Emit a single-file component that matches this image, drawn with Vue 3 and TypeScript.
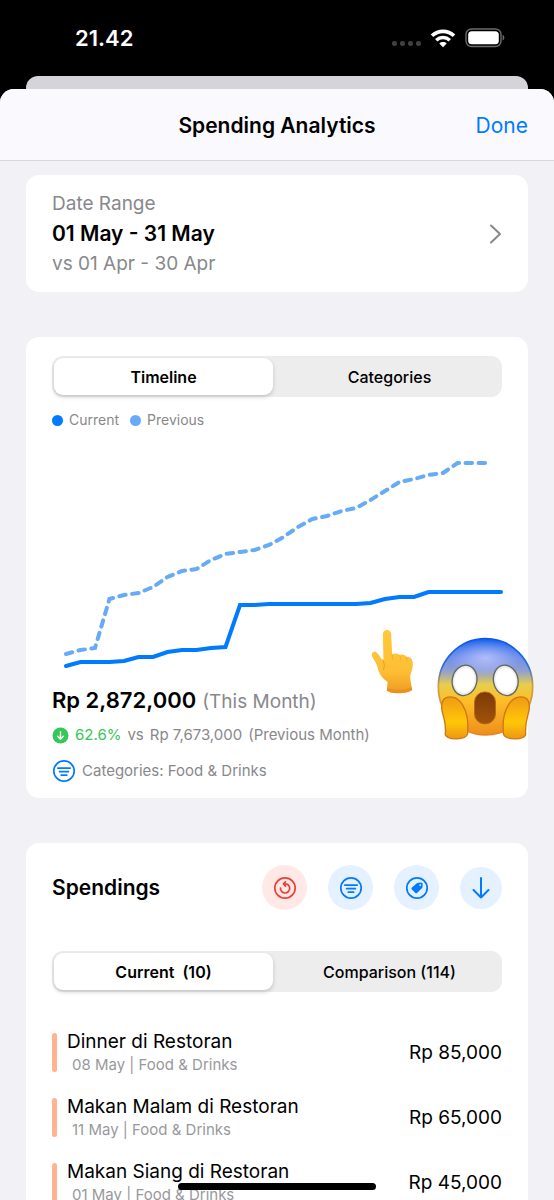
<script setup lang="ts">
import { ref } from 'vue'

interface Spending {
  title: string
  date: string
  category: string
  amount: string
}

const chartView = ref<'timeline' | 'categories'>('timeline')
const listView = ref<'current' | 'comparison'>('current')

const spendings: Spending[] = [
  { title: 'Dinner di Restoran', date: '08 May', category: 'Food & Drinks', amount: 'Rp 85,000' },
  { title: 'Makan Malam di Restoran', date: '11 May', category: 'Food & Drinks', amount: 'Rp 65,000' },
  { title: 'Makan Siang di Restoran', date: '01 May', category: 'Food & Drinks', amount: 'Rp 45,000' },
]

// Daily running totals, as heights in the chart's own 450 x 250 space
const currentLine = [
  234, 230, 230, 230, 229, 225, 225, 220, 218, 218, 216, 215, 173, 173, 172, 172,
  172, 172, 172, 172, 172, 171, 167, 165, 165, 160, 160, 160, 160, 160, 160,
]
const previousLine = [
  222, 218, 216, 167, 163, 161, 155, 145, 139, 137, 128, 122, 120, 118, 113,
  105, 95, 87, 84, 79, 76, 68, 59, 50, 47, 43, 41, 31, 31, 31,
]
const toPoints = (values: number[]): string =>
  values.map((y, day) => `${(14 + day * 14.5).toFixed(1)},${y}`).join(' ')
</script>

<template>
  <div class="page">
    <header class="status">
      <span class="time">21.42</span>
      <div class="status-icons">
        <svg width="29" height="6" viewBox="0 0 29 6" fill="#404040" aria-hidden="true">
          <rect x="0" y="0" width="5" height="5" rx="2" />
          <rect x="8" y="0" width="5" height="5" rx="2" />
          <rect x="16" y="0" width="5" height="5" rx="2" />
          <rect x="24" y="0" width="5" height="5" rx="2" />
        </svg>
        <svg class="wifi" width="26" height="19" viewBox="0 0 26 19" fill="none" stroke="#fff" aria-hidden="true">
          <path d="M2 6.8C8.2 .9 17.8 .9 24 6.8" stroke-width="3.6" />
          <path d="M6.2 11.2c3.9-3.6 9.7-3.6 13.6 0" stroke-width="3.5" />
          <path d="M9.3 14.5c2.1-1.9 5.3-1.9 7.4 0L13 18.2z" fill="#fff" stroke="none" />
        </svg>
        <svg width="40" height="20" viewBox="0 0 40 20" aria-hidden="true">
          <rect x="1" y="1" width="35" height="17.5" rx="5.5" fill="none" stroke="#6b6b6b" stroke-width="1.4" />
          <rect x="3.2" y="3.2" width="30.6" height="13.1" rx="3.6" fill="#fff" />
          <path d="M37.6 6.8c2.3.8 2.3 5 0 5.8z" fill="#6b6b6b" />
        </svg>
      </div>
    </header>

    <div class="behind"></div>

    <main class="sheet">
      <div class="nav">
        <h1>Spending Analytics</h1>
        <button type="button" class="done">Done</button>
      </div>

      <button type="button" class="card date-card">
        <span class="date-text">
          <span class="muted">Date Range</span>
          <strong>01 May - 31 May</strong>
          <span class="muted">vs 01 Apr - 30 Apr</span>
        </span>
        <svg width="13" height="22" viewBox="0 0 13 22" fill="none" stroke="#88888c" stroke-width="2" stroke-linecap="round" stroke-linejoin="round" aria-hidden="true">
          <path d="M2 2.5 11 11 2 19.5" />
        </svg>
      </button>

      <section class="card chart-card">
        <div class="segmented">
          <button type="button" :class="{ on: chartView === 'timeline' }" :aria-pressed="chartView === 'timeline'" @click="chartView = 'timeline'">Timeline</button>
          <button type="button" :class="{ on: chartView === 'categories' }" :aria-pressed="chartView === 'categories'" @click="chartView = 'categories'">Categories</button>
        </div>

        <div class="legend">
          <span class="key"><i class="dot"></i>Current</span>
          <span class="key"><i class="dot light"></i>Previous</span>
        </div>

        <svg class="chart" viewBox="0 0 450 250" fill="none" stroke-width="4" stroke-linecap="round" stroke-linejoin="miter" role="img" aria-label="Spending this month and last month">
          <polyline :points="toPoints(previousLine)" stroke="#66abf6" stroke-dasharray="6.5 6.5" />
          <polyline :points="toPoints(currentLine)" stroke="#007aff" />
        </svg>

        <p class="total"><strong>Rp 2,872,000</strong><span>(This Month)</span></p>
        <p class="change">
          <svg width="17" height="17" viewBox="0 0 17 17" aria-hidden="true">
            <circle cx="8.5" cy="8.5" r="8" fill="#34c759" />
            <path d="M8.5 4.6v7.4M5.6 9.3l2.9 2.9 2.9-2.9" fill="none" stroke="#fff" stroke-width="1.4" stroke-linecap="round" stroke-linejoin="round" />
          </svg>
          <span class="down">62.6%</span>
          <span>vs</span>
          <span>Rp 7,673,000</span>
          <span>(Previous Month)</span>
        </p>
        <p class="filter">
          <svg width="24" height="24" viewBox="0 0 24 24" fill="none" stroke="#007aff" stroke-width="1.7" stroke-linecap="round" aria-hidden="true">
            <circle cx="12" cy="12" r="10.2" />
            <path d="M5.8 9.1h12.4M7.6 12.7h8.8M9.3 16.2h5.4" />
          </svg>
          <span>Categories: Food &amp; Drinks</span>
        </p>

        <svg class="finger" width="43" height="66" viewBox="64 56 128 198" aria-hidden="true">
          <defs>
            <linearGradient id="skin" x1="0" y1="0" x2="0" y2="1">
              <stop offset="0" stop-color="#ffc938" />
              <stop offset=".65" stop-color="#fdbf35" />
              <stop offset="1" stop-color="#ee9a21" />
            </linearGradient>
          </defs>
          <path d="M99 72c0-17 25-17 25 0l3 60c7-4 16-3 22 2 8-3 16-1 20 5 12-1 20 7 20 20 0 20-8 31-8 45l6 34c-14 13-61 14-76 3l2-26C99 205 87 192 83 171c-2-12-10-20-16-32-5-13 8-20 17-9 7 8 10 17 17 22z" fill="url(#skin)" />
          <path d="M127 132l1 16M149 135c4 4 4 8 3 12M169 140c3 4 3 8 1 12" fill="none" stroke="#efa92b" stroke-width="2" stroke-linecap="round" />
          <path d="M99 148c5 10 6 20 2 30" fill="none" stroke="#e29420" stroke-width="2.500" stroke-linecap="round" />
          <path d="M112 232c21 9 55 8 74-2l1 10c-14 11-61 12-75 1z" fill="#df861b" opacity=".5" />
        </svg>

        <svg class="scream" width="97" height="104" viewBox="260 82 292 312" aria-hidden="true">
          <defs>
            <linearGradient id="face" x1="0" y1="0" x2="0" y2="1">
              <stop offset="0" stop-color="#1661ec" />
              <stop offset=".2" stop-color="#6f8eeb" />
              <stop offset=".34" stop-color="#91a0cf" />
              <stop offset=".48" stop-color="#e8ce4c" />
              <stop offset=".65" stop-color="#fdbd28" />
              <stop offset="1" stop-color="#ee8f1b" />
            </linearGradient>
            <linearGradient id="rim" x1="0" y1="0" x2="0" y2="1">
              <stop offset="0" stop-color="#0754ee" />
              <stop offset=".3" stop-color="#2c72d5" />
              <stop offset=".48" stop-color="#d19c40" />
              <stop offset="1" stop-color="#e98419" />
            </linearGradient>
            <radialGradient id="glow" cx=".5" cy=".5" r=".5">
              <stop offset="0" stop-color="#bdc4ff" stop-opacity=".85" />
              <stop offset="1" stop-color="#bdc4ff" stop-opacity="0" />
            </radialGradient>
            <radialGradient id="eye" cx=".5" cy=".5" r=".5">
              <stop offset=".75" stop-color="#fff" />
              <stop offset="1" stop-color="#dedede" />
            </radialGradient>
            <linearGradient id="mouth" x1="0" y1="0" x2="0" y2="1">
              <stop offset="0" stop-color="#7a3a08" />
              <stop offset="1" stop-color="#a35309" />
            </linearGradient>
            <linearGradient id="palm" x1="0" y1="0" x2="0" y2="1">
              <stop offset="0" stop-color="#f09a15" />
              <stop offset=".6" stop-color="#ffc708" />
              <stop offset="1" stop-color="#ee9614" />
            </linearGradient>
          </defs>
          <ellipse cx="406" cy="231" rx="142" ry="145" fill="url(#face)" stroke="url(#rim)" stroke-width="5" />
          <ellipse cx="406" cy="145" rx="108" ry="54" fill="url(#glow)" />
          <ellipse cx="343" cy="212" rx="37" ry="46" transform="rotate(12 343 212)" fill="url(#eye)" stroke="#65665d" stroke-width="4" />
          <ellipse cx="467" cy="212" rx="37" ry="46" transform="rotate(-12 467 212)" fill="url(#eye)" stroke="#65665d" stroke-width="4" />
          <rect x="373" y="247" width="63" height="96" rx="30" fill="url(#mouth)" stroke="#b66a0d" stroke-width="3" />
          <path d="M281 268c17-13 42-5 55 16 13 20 20 50 16 90-5 17-59 20-67 2 4-45-11-62-11-82 0-12 2-20 7-26z" fill="url(#palm)" stroke="#cf7712" stroke-width="4" />
          <path d="M531 268c-17-13-42-5-55 16-13 20-20 50-16 90 5 17 59 20 67 2-4-45 11-62 11-82 0-12-2-20-7-26z" fill="url(#palm)" stroke="#cf7712" stroke-width="4" />
        </svg>
      </section>

      <section class="card list-card">
        <div class="list-head">
          <h2>Spendings</h2>
          <div class="actions">
            <button type="button" class="round red" aria-label="Reset">
              <svg width="24" height="24" viewBox="0 0 24 24" fill="none" stroke="currentColor" stroke-width="1.7" stroke-linecap="round" stroke-linejoin="round" aria-hidden="true">
                <circle cx="12" cy="12" r="10.2" />
                <path d="M7.5 12.2a4.6 4.6 0 1 0 4.3-4.4M12.4 5.8l-2 2 2.1 2.3" />
              </svg>
            </button>
            <button type="button" class="round" aria-label="Filter">
              <svg width="24" height="24" viewBox="0 0 24 24" fill="none" stroke="currentColor" stroke-width="1.7" stroke-linecap="round" aria-hidden="true">
                <circle cx="12" cy="12" r="10.2" />
                <path d="M5.8 9.1h12.4M7.6 12.7h8.8M9.3 16.2h5.4" />
              </svg>
            </button>
            <button type="button" class="round" aria-label="Tags">
              <svg width="24" height="24" viewBox="0 0 24 24" fill="none" stroke="currentColor" stroke-width="1.7" aria-hidden="true">
                <circle cx="12" cy="12" r="10.2" />
                <path fill="currentColor" fill-rule="evenodd" stroke="none" d="M13.3 6.8 16 6.5c1.1-.1 1.8.7 1.7 1.7l-.2 2.7c0 .5-.2.9-.6 1.3l-4.6 4.6c-.7.7-1.5.7-2.2 0L6.9 13.6c-.7-.7-.7-1.5 0-2.2L11.6 7.4c.5-.4 1-.5 1.7-.6zM15.2 8.2a.9.9 0 1 0 .01 0z" />
              </svg>
            </button>
            <button type="button" class="round small" aria-label="Sort descending">
              <svg width="20" height="24" viewBox="0 0 20 24" fill="none" stroke="currentColor" stroke-width="2" stroke-linecap="round" stroke-linejoin="round" aria-hidden="true">
                <path d="M10 2v19.5M2.5 14 10 21.5 17.5 14" />
              </svg>
            </button>
          </div>
        </div>

        <div class="segmented">
          <button type="button" :class="{ on: listView === 'current' }" :aria-pressed="listView === 'current'" @click="listView = 'current'">Current&nbsp; (10)</button>
          <button type="button" :class="{ on: listView === 'comparison' }" :aria-pressed="listView === 'comparison'" @click="listView = 'comparison'">Comparison (114)</button>
        </div>

        <ul class="rows">
          <li v-for="item in spendings" :key="item.title">
            <i class="bar"></i>
            <div class="info">
              <span class="name">{{ item.title }}</span>
              <span class="meta">{{ item.date }} | {{ item.category }}</span>
            </div>
            <span class="amount">{{ item.amount }}</span>
          </li>
        </ul>
      </section>
    </main>

    <div class="home-indicator"></div>
  </div>
</template>

<style>
body {
  margin: 0;
  background: #000;
}
</style>

<style scoped>
.page {
  display: flex;
  flex-direction: column;
  height: 100vh;
  overflow: hidden;
  background: #000;
  color: #000;
  font-family: Inter, "Liberation Sans", sans-serif;
  font-size: 18px;
}
button {
  border: 0;
  padding: 0;
  background: none;
  color: inherit;
  font: inherit;
  cursor: pointer;
}
h1, h2, p, ul {
  margin: 0;
  padding: 0;
}
svg {
  display: block;
  flex: none;
}
strong {
  font-weight: 600;
}
.status {
  display: flex;
  flex: none;
  align-items: center;
  justify-content: space-between;
  height: 76px;
  box-sizing: border-box;
  padding: 0 49px 0 75px;
  color: #fff;
}
.time {
  font-size: 22px;
  font-weight: 600;
}
.status-icons {
  display: flex;
  align-items: center;
  gap: 9px;
}
.status-icons svg:first-child {
  margin-top: 12px;
}
.behind {
  flex: none;
  height: 13px;
  margin: 0 26px;
  border-radius: 12px 12px 0 0;
  background: #d5d4da;
}
.sheet {
  flex: 1;
  min-height: 0;
  overflow: hidden;
  border-radius: 14px 14px 0 0;
  background: #f1f1f6;
}
.nav {
  display: grid;
  grid-template-columns: 1fr auto 1fr;
  align-items: center;
  height: 72px;
  box-sizing: border-box;
  padding: 1px 26px 0;
  border-bottom: 1px solid #d6d6db;
  background: #fafafe;
}
h1 {
  grid-column: 2;
  font-size: 21px;
  font-weight: 600;
}
.done {
  justify-self: end;
  color: #007aff;
  font-size: 21px;
}
.card {
  position: relative;
  box-sizing: border-box;
  margin: 45px 26px 0;
  border-radius: 13px;
  background: #fff;
}
.date-card {
  display: flex;
  align-items: center;
  justify-content: space-between;
  width: calc(100% - 52px);
  margin-top: 14px;
  padding: 14px 26px 13px;
  text-align: left;
}
.date-text {
  display: flex;
  flex-direction: column;
  font-size: 19px;
  line-height: 30px;
}
.date-text strong {
  font-size: 21px;
}
.muted {
  color: #88888c;
}
.chart-card {
  padding: 19px 26px 15px;
}
.segmented {
  display: grid;
  grid-template-columns: 219fr 221fr;
  gap: 6px;
  padding: 2px;
  border-radius: 11px;
  background: #ededee;
}
.segmented button {
  height: 37px;
  border-radius: 9px;
  font-size: 16px;
  font-weight: 500;
}
.segmented .on {
  background: #fff;
  box-shadow: 0 2px 4px rgba(0, 0, 0, 0.18);
  font-weight: 600;
}
.legend {
  display: flex;
  gap: 11px;
  margin-top: 13px;
  color: #88888c;
  font-size: 14px;
  line-height: 20px;
}
.key {
  display: flex;
  align-items: center;
  gap: 6px;
}
.dot {
  width: 11px;
  height: 11px;
  border-radius: 50%;
  background: #007aff;
}
.dot.light {
  background: #66abfb;
}
.chart {
  width: 100%;
  height: auto;
  margin-top: 2px;
  overflow: visible;
}
.total {
  display: flex;
  align-items: baseline;
  gap: 6px;
  margin-top: 3px;
  color: #88888c;
  font-size: 19px;
  line-height: 30px;
}
.total strong {
  color: #000;
  font-size: 22px;
}
.change {
  display: flex;
  align-items: center;
  gap: 6px;
  margin-top: 6px;
  color: #88888c;
  font-size: 15px;
  line-height: 24px;
}
.down {
  color: #34c759;
}
.filter {
  display: flex;
  align-items: center;
  gap: 6px;
  margin-top: 12px;
  color: #88888c;
  font-size: 15px;
  line-height: 24px;
}
.finger {
  position: absolute;
  top: 292px;
  right: 114px;
}
.scream {
  position: absolute;
  top: 300px;
  right: -6px;
}
.list-card {
  padding: 22px 26px;
}
.list-head {
  display: flex;
  align-items: center;
  justify-content: space-between;
  margin-bottom: 41px;
}
h2 {
  font-size: 21px;
  font-weight: 600;
}
.actions {
  display: flex;
  align-items: center;
  gap: 21px;
}
.round {
  display: grid;
  place-items: center;
  width: 45px;
  height: 45px;
  border-radius: 50%;
  background: #e5f1ff;
  color: #007aff;
}
.round.red {
  background: #ffe9e7;
  color: #ee4038;
}
.round.small {
  width: 42px;
  height: 42px;
}
.rows {
  display: flex;
  flex-direction: column;
  gap: 20px;
  margin-top: 38px;
  list-style: none;
}
.rows li {
  display: flex;
  align-items: center;
}
.bar {
  width: 5px;
  height: 39px;
  margin-right: 10px;
  border-radius: 3px;
  background: #ffb38f;
}
.info {
  display: flex;
  flex: 1;
  flex-direction: column;
}
.name {
  font-size: 19px;
  line-height: 24px;
}
.meta {
  padding-left: 5px;
  color: #98989c;
  font-size: 15px;
  line-height: 21px;
}
.amount {
  font-size: 19px;
}
.home-indicator {
  position: fixed;
  bottom: 10px;
  left: 50%;
  width: 198px;
  height: 7px;
  border-radius: 4px;
  background: #000;
  transform: translateX(-50%);
}
</style>
